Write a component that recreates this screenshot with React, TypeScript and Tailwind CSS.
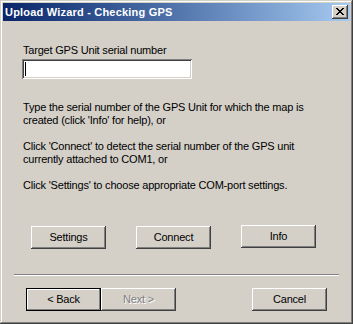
const FONT = { fontFamily: '"Liberation Sans", Arial, sans-serif' };

const BEVEL =
  'shadow-[inset_-1px_-1px_#404040,inset_1px_1px_#ffffff,inset_-2px_-2px_#808080,inset_2px_2px_#d4d0c8]';

function Button({ label, className = '' }: { label: string; className?: string }) {
  return (
    <button
      className={`w-[75px] h-[23px] bg-[#d4d0c8] text-[11px] tracking-[-0.2px] text-black flex items-center justify-center ${BEVEL} ${className}`}
      style={FONT}
    >
      {label}
    </button>
  );
}

function CloseGlyph() {
  // classic 8x7 close cross
  const rows = ['XX....XX', '.XX..XX.', '..XXXX..', '...XX...', '..XXXX..', '.XX..XX.', 'XX....XX'];
  return (
    <svg width="8" height="7" viewBox="0 0 8 7" shapeRendering="crispEdges">
      {rows.map((r, y) =>
        r.split('').map((c, x) => (c === 'X' ? <rect key={`${x}-${y}`} x={x} y={y} width="1" height="1" fill="#000" /> : null))
      )}
    </svg>
  );
}

export default function App() {
  return (
    <div
      className="w-[353px] h-[324px] bg-[#d4d0c8] p-[3px] flex flex-col shadow-[inset_-1px_-1px_#404040,inset_1px_1px_#d4d0c8,inset_-2px_-2px_#808080,inset_2px_2px_#ffffff]"
      style={FONT}
    >
      {/* Title bar */}
      <div className="h-[18px] flex items-center justify-between pl-[2px] pr-[2px] bg-linear-to-r from-[#0a246a] to-[#a6caf0]">
        <span className="text-white font-bold text-[11px] tracking-[0.2px] leading-[13px]">Upload Wizard - Checking GPS</span>
        <div className={`w-[16px] h-[14px] bg-[#d4d0c8] flex items-center justify-center pb-[1px] ${BEVEL}`}>
          <CloseGlyph />
        </div>
      </div>

      {/* Body */}
      <div className="flex flex-col pl-[20px] text-[11px] tracking-[-0.2px] leading-[13px] text-black">
        <div className="mt-[23px]">Target GPS Unit serial number</div>
        <div className="mt-[2px] -ml-[1px] w-[170px] h-[20px] bg-white flex items-center pl-[3px] shadow-[inset_1px_1px_#808080,inset_-1px_-1px_#ffffff,inset_2px_2px_#404040,inset_-2px_-2px_#d4d0c8]">
          <div className="w-[1px] h-[14px] bg-black" />
        </div>

        <div className="mt-[22px] flex flex-col gap-[13px]">
          <p>
            Type the serial number of the GPS Unit for which the map is
            <br />
            created (click 'Info' for help), or
          </p>
          <p>
            Click 'Connect' to detect the serial number of the GPS unit
            <br />
            currently attached to COM1, or
          </p>
          <p>Click 'Settings' to choose appropriate COM-port settings.</p>
        </div>

        <div className="mt-[34px] ml-[8px] flex gap-[30px]">
          <Button label="Settings" />
          <Button label="Connect" />
          <Button label="Info" className="-mt-[1px]" />
        </div>
      </div>

      {/* Separator */}
      <div className="mt-[25px] mx-[11px] h-[2px] border-t border-t-[#808080] border-b border-b-white" />

      {/* Wizard buttons */}
      <div className="mt-[12px] ml-[23px] flex">
        <button
          className="w-[75px] h-[23px] bg-[#d4d0c8] text-[11px] tracking-[-0.2px] text-black flex items-center justify-center border border-black shadow-[inset_-1px_-1px_#808080,inset_1px_1px_#ffffff]"
          style={FONT}
        >
          &lt; Back
        </button>
        <button
          className={`w-[75px] h-[23px] bg-[#d4d0c8] text-[11px] tracking-[-0.2px] text-[#808080] flex items-center justify-center [text-shadow:1px_1px_0_#ffffff] ${BEVEL}`}
          style={FONT}
        >
          Next &gt;
        </button>
        <Button label="Cancel" className="ml-[76px]" />
      </div>
    </div>
  );
}
